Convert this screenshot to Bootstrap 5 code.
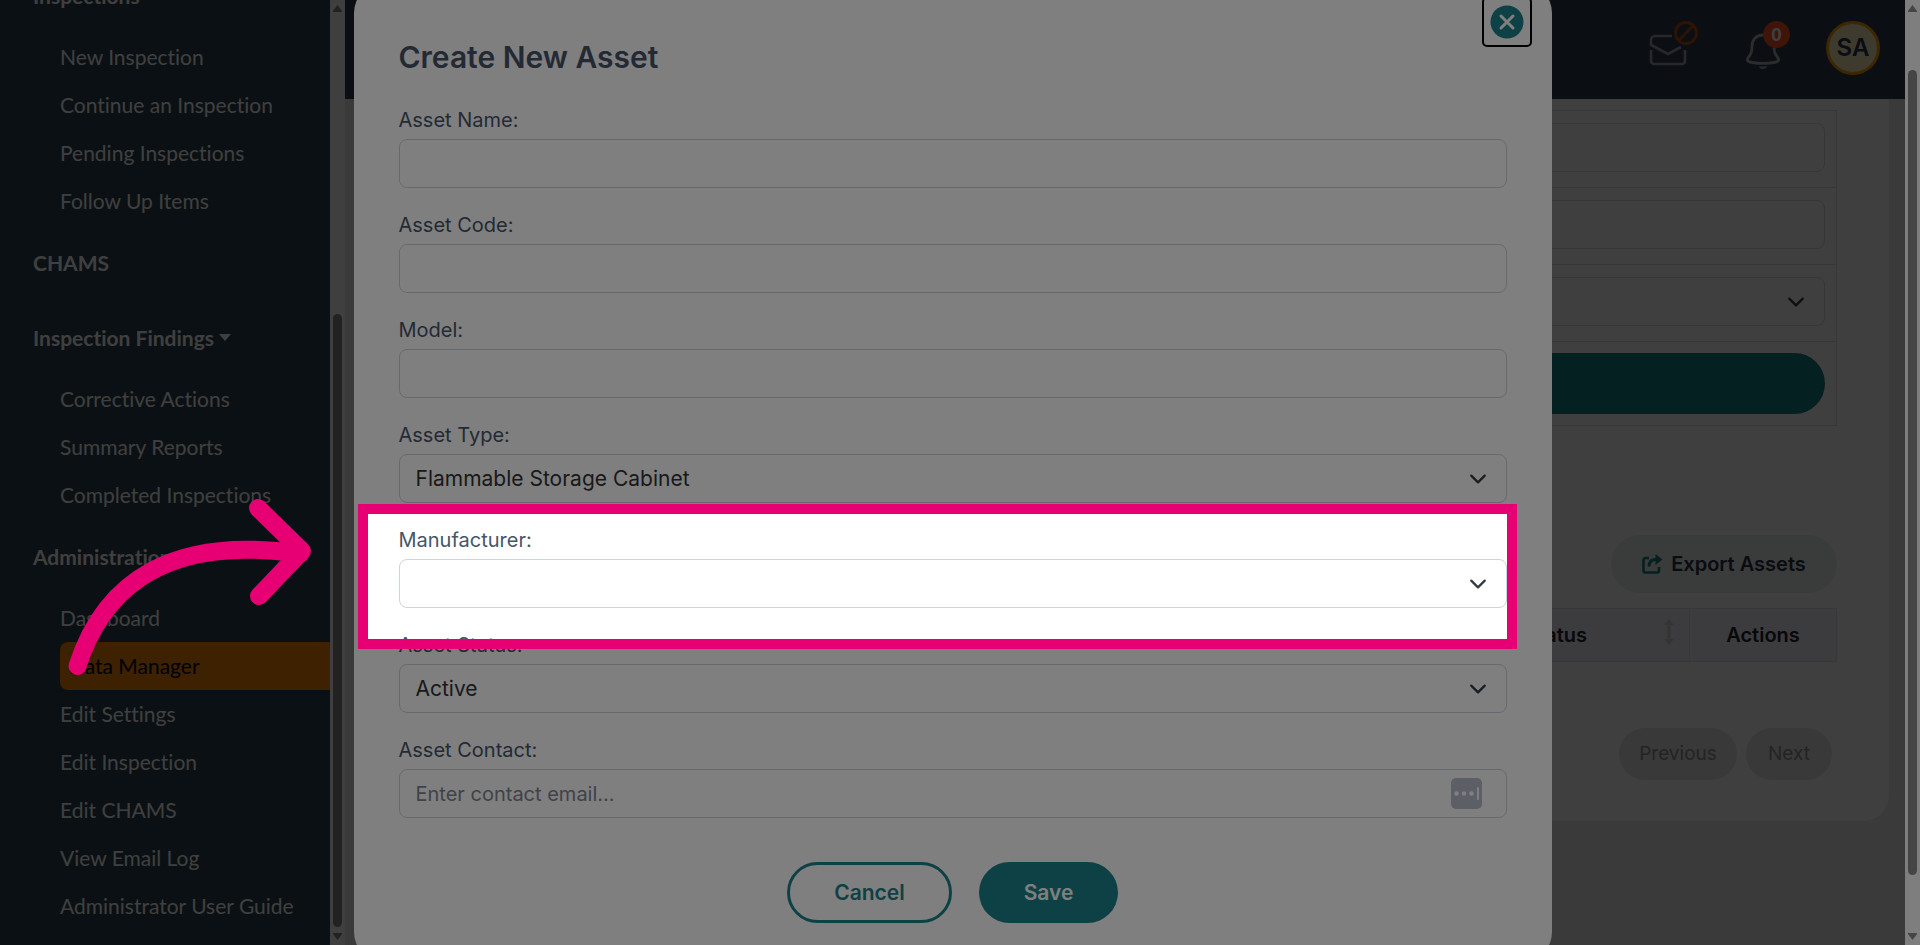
<!DOCTYPE html>
<html lang="en">
<head>
<meta charset="utf-8">
<meta name="viewport" content="width=device-width, initial-scale=1">
<title>Create New Asset</title>
<link href="https://cdn.jsdelivr.net/npm/bootstrap@5.3.0/dist/css/bootstrap.min.css" rel="stylesheet">
<style>
  :root { --gutter: 15px; --teal: #1d828a; --line: #cbd5e1; --pink: #e60073; }
  body { font-family: Inter, "Open Sans", sans-serif; font-size: 20px; background: #e8e8e8; }

  /* sidebar */
  .side { width: 330px; background: #28404c; font-family: Lato, sans-serif; font-size: 21px; font-variant-ligatures: none; padding-bottom: 15px; }
  .side a { color: #fff; text-decoration: none; }
  .side .side-head { height: 75px; padding-left: 33px; font-weight: 700; }
  .side .side-item { height: 48px; margin-left: 60px; }
  .side .side-item.active { background: #f48400; color: #000; padding-left: 9px; border-radius: 8px 0 0 8px; }
  .caret { width: 0; border: 6px solid transparent; border-top: 7px solid #fff; border-bottom: 0; margin-left: 5px; }

  /* scroll tracks */
  .track { width: var(--gutter); background: #fcfcfc; padding: 5px 3px; }
  .track svg { width: 9px; height: 7px; fill: #8b8b8b; }
  .thumb { width: 9px; border-radius: 5px; background: #8b8b8b; }

  /* page behind the dialog */
  .topbar { height: 99px; background: #2c384c; padding: 0 25px 3px 0; }
  .icon-btn { background: none; border: 0; padding: 0; position: relative; }
  .count { position: absolute; left: 17px; top: -12px; width: 27px; height: 27px; background: #fc5024; color: #fff; font: 700 19px/27px "Liberation Sans", sans-serif; }
  .avatar { width: 54px; height: 54px; border: 3px solid #f49c00; background: #f8ecb8; color: #28344c; font-size: 24px; font-weight: 600; }
  .panel { background: #fff; margin: 0 16px 0 15px; padding: 11px 52px 41px; border-radius: 0 0 26px 26px; }
  .filters { border: 1px solid #dcdcdc; margin-bottom: 109px; }
  .filters .cell { padding: 12px 11px 15px; border-bottom: 1px solid #dcdcdc; }
  .filters .cell:last-child { padding: 11px 11px 11px; border: 0; }
  .field { height: 49px; border: 1px solid var(--line); border-radius: 8px; font-size: 20px; padding: 0 16px; }
  .filters .field { border-color: #d8d8d8; background-color: #fff; }
  select.field { font-size: 21px; background-size: 18px 18px; background-position: right 19px center; }
  .pill { border-radius: 31px; border: 0; }
  .search { height: 61px; background: #148080; }
  .export { height: 58px; width: 226px; background: #e8f0ec; color: #243044; font-weight: 600; }
  .grid-table { margin: 15px 0 66px; font-size: 20px; }
  .grid-table th { background: #f0f0f8; border: 1px solid #e0e0e0; height: 53px; padding: 0; font-weight: 600; }
  .pager { height: 52px; background: #e4e4e4; color: #909090; font-size: 19px; }

  /* dialog */
  .veil { right: var(--gutter); background: rgba(0,0,0,.5); }
  .stage { inset: 0 var(--gutter) 0 0; }
  .dialog { width: 1198px; flex: none; background: #fff; border-radius: 30px; padding: 56px 45px 39px; color: #475569; border: 0; }
  .dialog h1 { font-size: 30px; font-weight: 600; line-height: 36px; margin-bottom: 32px; }
  .dialog label { line-height: 26px; margin-bottom: 6px; display: block; }
  .group { position: relative; margin-bottom: 24px; }
  .group .field { background-color: #fff; color: #333; }
  .group .field::placeholder { color: #808692; }
  .close-box { position: absolute; right: 20px; top: 14px; width: 50px; height: 50px; border: 2px solid #000; border-radius: 5px; background: none; padding: 0; }
  .filler { position: absolute; right: 25px; bottom: 9px; width: 31px; height: 31px; }
  .actions { gap: 27px; padding-top: 20px; }
  .actions button { height: 61px; font-size: 21px; font-weight: 600; }
  .cancel { width: 165px; border: 3px solid var(--teal); border-radius: 31px; background: none; color: var(--teal); }
  .save { width: 139px; background: var(--teal); color: #fff; }

  /* guided-tour highlight: the shadow dims all that lies outside the frame */
  .spot { position: absolute; inset: -23px -10px -41px -41px; border: 10px solid var(--pink); box-shadow: 0 0 0 4000px rgba(0,0,0,.5); pointer-events: none; z-index: 5; }
  .pointer { position: fixed; left: 60px; top: 490px; width: 260px; height: 195px; z-index: 20; pointer-events: none; }
</style>
</head>
<body class="vh-100 overflow-hidden d-flex">

<nav class="side d-flex flex-column justify-content-end overflow-hidden flex-shrink-0">
  <a href="#" class="side-head d-flex align-items-center flex-shrink-0">Inspections<span class="caret"></span></a>
  <a href="#" class="side-item d-flex align-items-center flex-shrink-0">New Inspection</a>
  <a href="#" class="side-item d-flex align-items-center flex-shrink-0">Continue an Inspection</a>
  <a href="#" class="side-item d-flex align-items-center flex-shrink-0">Pending Inspections</a>
  <a href="#" class="side-item d-flex align-items-center flex-shrink-0">Follow Up Items</a>
  <a href="#" class="side-head d-flex align-items-center flex-shrink-0">CHAMS</a>
  <a href="#" class="side-head d-flex align-items-center flex-shrink-0">Inspection Findings<span class="caret"></span></a>
  <a href="#" class="side-item d-flex align-items-center flex-shrink-0">Corrective Actions</a>
  <a href="#" class="side-item d-flex align-items-center flex-shrink-0">Summary Reports</a>
  <a href="#" class="side-item d-flex align-items-center flex-shrink-0">Completed Inspections</a>
  <a href="#" class="side-head d-flex align-items-center flex-shrink-0">Administration</a>
  <a href="#" class="side-item d-flex align-items-center flex-shrink-0">Dashboard</a>
  <a href="#" class="side-item d-flex align-items-center flex-shrink-0 active">Data Manager</a>
  <a href="#" class="side-item d-flex align-items-center flex-shrink-0">Edit Settings</a>
  <a href="#" class="side-item d-flex align-items-center flex-shrink-0">Edit Inspection</a>
  <a href="#" class="side-item d-flex align-items-center flex-shrink-0">Edit CHAMS</a>
  <a href="#" class="side-item d-flex align-items-center flex-shrink-0">View Email Log</a>
  <a href="#" class="side-item d-flex align-items-center flex-shrink-0">Administrator User Guide</a>
</nav>
<div class="track d-flex flex-column flex-shrink-0" aria-hidden="true">
  <svg viewBox="0 0 9 7"><path d="M4.500 0 9 6V7H0V6z"/></svg>
  <div style="flex:302"></div><div class="thumb" style="flex:613"></div><div style="flex:6"></div>
  <svg viewBox="0 0 9 7"><path d="M4.500 7 9 1V0H0V1z"/></svg>
</div>

<main class="flex-grow-1 overflow-hidden">
  <header class="topbar d-flex align-items-center justify-content-end">
    <button class="icon-btn" aria-label="Messages" style="margin-right:48px">
      <svg class="d-block" width="52" height="54" viewBox="0 0 52 54" fill="none">
        <g stroke="#9ca0b0" stroke-width="2.600"><path d="M26 15H9a4 4 0 0 0-4 4v5l17 9 13-7"/><path d="M5 29v11a3 3 0 0 0 3 3h28a3 3 0 0 0 3-3V29"/></g>
        <g stroke="#b85000" stroke-width="2.800"><circle cx="40" cy="12" r="10.500"/><path d="M33 19 47 5"/></g>
      </svg>
    </button>
    <button class="icon-btn" aria-label="Notifications" style="margin-right:46px">
      <svg class="d-block" width="34" height="31" viewBox="0 0 34 31" overflow="visible" fill="none" stroke="#b0b0b0" stroke-width="2.800">
        <path d="M17 2C10 2 6 7 6 13c0 6-1 8-4 12-2 3 1 4 4 4.500 7 1.200 15 1.200 22 0 3-.5 6-1.500 4-4.500-3-4-4-6-4-12 0-6-4-11-11-11z"/><path d="M12.500 33.500h9q-4.500 5-9 0z" fill="#b0b0b0" stroke="none"/>
      </svg>
      <span class="count rounded-circle">0</span>
    </button>
    <div class="avatar rounded-circle d-flex align-items-center justify-content-center">SA</div>
  </header>
  <section class="panel">
    <div class="filters">
      <div class="cell"><input class="form-control field" aria-label="Asset name filter"></div>
      <div class="cell"><input class="form-control field" aria-label="Asset code filter"></div>
      <div class="cell"><select class="form-select field" aria-label="Asset type filter"><option></option></select></div>
      <div class="cell"><button class="pill search w-100 d-block" aria-label="Search"></button></div>
    </div>
    <div class="d-flex justify-content-end">
      <button class="pill export d-flex align-items-center justify-content-center gap-2">
        <svg width="21" height="20" viewBox="0 0 21 20" fill="none"><path d="M7 4H3.500A2 2 0 0 0 1.500 6v10.500a2 2 0 0 0 2 2H15a2 2 0 0 0 2-2V13" stroke="#148080" stroke-width="2.600"/><path d="M7 12.500C7 7 10 5.500 14 5.500" stroke="#148080" stroke-width="2.800"/><path d="M13.500 0 20.500 5.500 13.500 11z" fill="#148080"/></svg>
        Export Assets</button>
    </div>
    <table class="grid-table w-100">
      <thead><tr>
        <th class="text-end"><span class="d-inline-flex align-items-center">Asset Status
          <svg width="10" height="26" viewBox="0 0 10 26" style="margin:0 15px 6px 77px"><path d="M5 0 10 6H6.500v14H10L5 26 0 20h3.500V6H0z" fill="#d0d0d0"/></svg></span></th>
        <th class="text-center" style="width:147px">Actions</th>
      </tr></thead>
    </table>
    <div class="d-flex justify-content-end" style="gap:9px;padding-right:5px">
      <button class="pill pager" style="width:118px" disabled>Previous</button>
      <button class="pill pager" style="width:86px" disabled>Next</button>
    </div>
  </section>
</main>
<div class="track d-flex flex-column flex-shrink-0" aria-hidden="true">
  <svg viewBox="0 0 9 7"><path d="M4.500 0 9 6V7H0V6z"/></svg>
  <div style="flex:58"></div><div class="thumb" style="flex:805"></div><div style="flex:58"></div>
  <svg viewBox="0 0 9 7"><path d="M4.500 7 9 1V0H0V1z"/></svg>
</div>

<div class="veil position-fixed top-0 bottom-0 start-0"></div>
<div class="stage position-fixed d-flex align-items-center justify-content-center" role="dialog" aria-modal="true" aria-labelledby="dlg">
  <form class="dialog position-relative">
    <button type="button" class="close-box d-flex align-items-center justify-content-center" aria-label="Close">
      <svg width="34" height="34" viewBox="0 0 34 34"><circle cx="17" cy="17" r="16.500" fill="#1d828a"/><path d="m11 11 12 12M23 11 11 23" stroke="#fff" stroke-width="3" stroke-linecap="round"/></svg>
    </button>
    <h1 id="dlg">Create New Asset</h1>
    <div class="group"><label for="f1">Asset Name:</label><input id="f1" class="form-control field"></div>
    <div class="group"><label for="f2">Asset Code:</label><input id="f2" class="form-control field"></div>
    <div class="group"><label for="f3">Model:</label><input id="f3" class="form-control field"></div>
    <div class="group"><label for="f4">Asset Type:</label><select id="f4" class="form-select field"><option>Flammable Storage Cabinet</option></select></div>
    <div class="group"><label for="f5">Manufacturer:</label><select id="f5" class="form-select field"><option></option></select><div class="spot"></div></div>
    <div class="group"><label for="f6">Asset Status:</label><select id="f6" class="form-select field"><option>Active</option></select></div>
    <div class="group"><label for="f7">Asset Contact:</label><input id="f7" type="email" class="form-control field" placeholder="Enter contact email...">
      <svg class="filler" viewBox="0 0 31 31" aria-hidden="true"><rect width="31" height="31" rx="5" fill="#b8c0cc"/><g fill="#fff"><circle cx="5.500" cy="15.500" r="2.300"/><circle cx="13" cy="15.500" r="2.300"/><circle cx="20.500" cy="15.500" r="2.300"/><rect x="26" y="9" width="2" height="13" rx="1"/></g></svg>
    </div>
    <div class="actions d-flex justify-content-center">
      <button type="button" class="cancel">Cancel</button>
      <button type="submit" class="pill save">Save</button>
    </div>
  </form>
</div>
<svg class="pointer" viewBox="60 490 260 195" fill="none" stroke="#e60073" stroke-width="18" stroke-linecap="round" stroke-linejoin="round" aria-hidden="true">
  <path d="M77.500 666C105 580 175 535 300 554M258 508l44 43-43 45"/>
</svg>

<script src="https://cdn.jsdelivr.net/npm/bootstrap@5.3.0/dist/js/bootstrap.bundle.min.js"></script>
</body>
</html>
